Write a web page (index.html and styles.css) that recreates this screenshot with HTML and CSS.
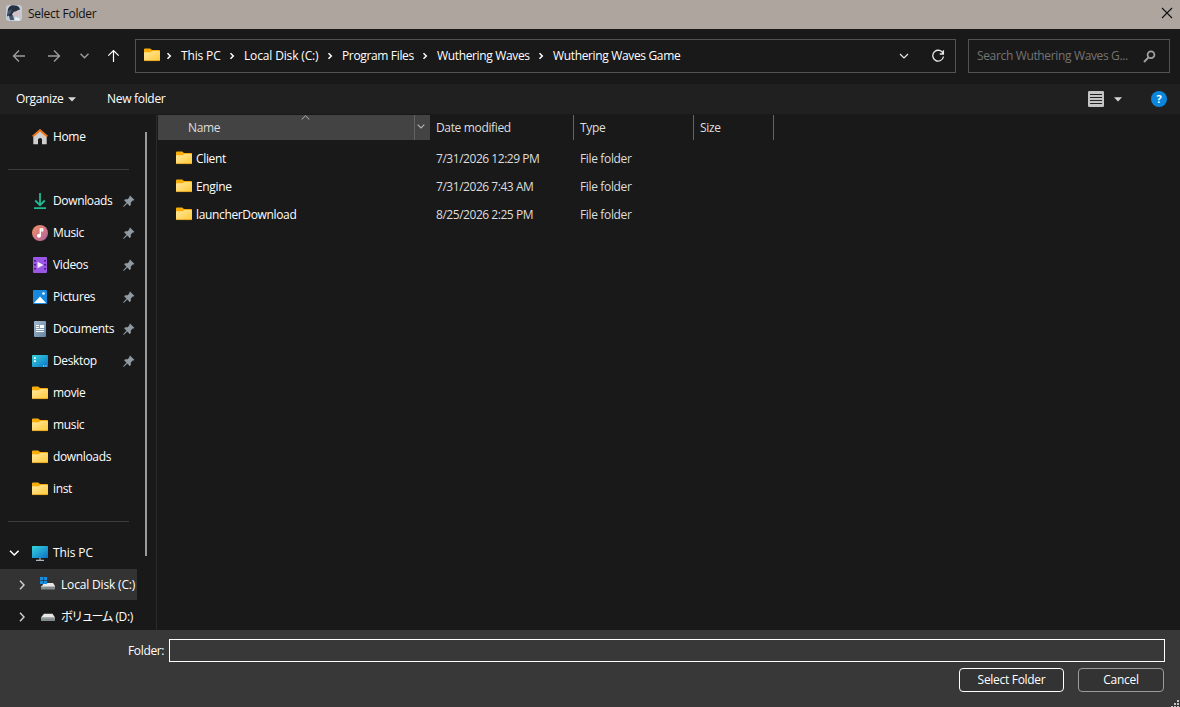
FILE: index.html
```html
<!DOCTYPE html>
<html lang="en">
<head>
    <meta charset="UTF-8">
    <meta name="viewport" content="width=device-width, initial-scale=1.0">
    <title>Select Folder</title>
    <link rel="stylesheet" href="styles.css">
</head>
<body>
    <!-- Shared icons -->
    <svg class="defs" width="0" height="0">
        <defs>
            <linearGradient id="gFolder" x1="0" y1="0" x2="1" y2="1">
                <stop offset="0" stop-color="#ffe8a0"/><stop offset="1" stop-color="#ffc937"/>
            </linearGradient>
            <linearGradient id="gScreen" x1="0" y1="0" x2="1" y2="1">
                <stop offset="0" stop-color="#35d6df"/><stop offset="1" stop-color="#0c6fc4"/>
            </linearGradient>
        </defs>
        <symbol id="folder" viewBox="0 0 16 16">
            <path d="M0 2.6Q0 1.5 1 1.5h5.2L8 3h7.2q.8 0 .8.8V8H0z" fill="#f8ad09"/>
            <path d="M0 6q0-.8.8-.8h6L8.300 4H15.200q.8 0 .8.800V13.300q0 .7-.8.7H.8Q0 14 0 13.300z" fill="url(#gFolder)"/>
            <path d="M.3 13.600h15.400" stroke="#dc9c1c" stroke-width=".8"/>
        </symbol>
        <symbol id="pin" viewBox="0 0 12 12">
            <path d="M7 .5 11.500 5l-1.200.6-.6-.1L7.800 7.600 7.900 9.900 6.700 10.900 4.300 8.500 1 11.700H.3V11L3.500 7.700 1.200 5.300 2.200 4.200 4.500 4.300 6.500 2.300 6.300 1.500z" fill="#8f9aa3"/>
        </symbol>
        <symbol id="right" viewBox="0 0 6 8">
            <path d="M1.500 1.200 4.300 4 1.500 6.800" fill="none" stroke="#fff" stroke-width="1.500"/>
        </symbol>
    </svg>

    <div class="dialog">
        <div class="titlebar">
            <svg class="app-icon" width="16" height="16" viewBox="0 0 16 16">
                <rect width="16" height="16" rx="3" fill="#c3ccd6"/>
                <path d="M2 4Q4-1 9 .5q4 0 5 4l-3 1-1 2-2-1-2 3 1 3-3 2-1-4-2 1z" fill="#28303f"/>
                <path d="M9 6.500q2-1 3 0l1 3-2 2-3-1z" fill="#d9bdc0"/>
                <path d="M2 6 6 4 5 8 2 10zM4 11l3-1 1 5H4z" fill="#46546c"/>
                <path d="M9 12l4 1 1 2.500H9z" fill="#eceff3"/>
            </svg>
            <span class="title">Select Folder</span>
            <svg class="close" width="12" height="12" viewBox="0 0 12 12"><path d="M1 1l10 10M11 1 1 11" stroke="#111" stroke-width="1.100"/></svg>
        </div>

        <div class="nav">
            <div class="nav-buttons">
                <svg width="14" height="14" viewBox="0 0 14 14"><path d="M13 7H1.500M7 1.500 1.500 7 7 12.500" fill="none" stroke="#9c9c9c" stroke-width="1.400"/></svg>
                <svg width="14" height="14" viewBox="0 0 14 14"><path d="M1 7h11.500M7 1.500 12.500 7 7 12.500" fill="none" stroke="#9c9c9c" stroke-width="1.400"/></svg>
                <svg class="recent" width="10" height="8" viewBox="0 0 10 8"><path d="M1.500 1.800 5.500 5.800 9.500 1.800" fill="none" stroke="#9c9c9c" stroke-width="1.400"/></svg>
                <svg width="14" height="14" viewBox="0 0 14 14"><path d="M7.500 13V1.500M2.300 6.700 7.500 1.500l5.200 5.200" fill="none" stroke="#fff" stroke-width="1.200"/></svg>
            </div>
            <div class="address">
                <svg class="folder" width="16" height="16"><use href="#folder"/></svg>
                <svg class="sep first" width="6" height="8"><use href="#right"/></svg>
                <span class="crumb c1">This PC</span>
                <svg class="sep" width="6" height="8"><use href="#right"/></svg>
                <span class="crumb c2">Local Disk (C:)</span>
                <svg class="sep" width="6" height="8"><use href="#right"/></svg>
                <span class="crumb c3">Program Files</span>
                <svg class="sep" width="6" height="8"><use href="#right"/></svg>
                <span class="crumb c4">Wuthering Waves</span>
                <svg class="sep" width="6" height="8"><use href="#right"/></svg>
                <span class="crumb c5">Wuthering Waves Game</span>
                <div class="address-actions">
                    <svg width="10" height="8" viewBox="0 0 10 8"><path d="M1 2 5 6 9 2" fill="none" stroke="#e8e8e8" stroke-width="1.200"/></svg>
                    <svg width="14" height="14" viewBox="0 0 14 14"><path d="M12.300 5A5.400 5.400 0 1 0 12.500 7.500M12.400 1.200V5H8.700" fill="none" stroke="#e8e8e8" stroke-width="1.300"/></svg>
                </div>
            </div>
            <div class="search">
                <span>Search Wuthering Waves G...</span>
                <svg width="13" height="13" viewBox="0 0 13 13"><circle cx="8" cy="4.800" r="3.400" fill="none" stroke="#a0a0a0" stroke-width="1.800"/><path d="M5.400 7.500 1 12" stroke="#a0a0a0" stroke-width="1.900"/></svg>
            </div>
        </div>

        <div class="toolbar">
            <span class="organize">Organize</span>
            <svg width="8" height="5" viewBox="0 0 8 5"><path d="M0 .3h8L4 4.500z" fill="#d6d6d6"/></svg>
            <span class="new-folder">New folder</span>
            <svg class="view" width="16" height="16" viewBox="0 0 16 16"><rect width="16" height="16" rx="1.200" fill="#c4c4c4"/><path d="M2 3.500h12M2 6.500h12M2 9.500h12M2 12.500h12" stroke="#222"/></svg>
            <svg class="view-arrow" width="8" height="5" viewBox="0 0 8 5"><path d="M0 .3h8L4 4.500z" fill="#d6d6d6"/></svg>
            <span class="help">?</span>
        </div>

        <div class="main">
            <div class="sidebar">
                <div class="tree">
                    <div class="item">
                        <svg width="16" height="16" viewBox="0 0 16 16"><path d="M1.300 7 8 1.500 14.700 7v8.200H10V10.500Q10 9 8.200 9T6 10.500v4.700H1.300z" fill="#cfcfcf"/><path d="M.7 7.600 8 1.200l7.300 6.400" fill="none" stroke="#e8761d" stroke-width="2"/></svg>
                        <span>Home</span>
                    </div>
                    <div class="line"></div>
                    <div class="item">
                        <svg width="16" height="16" viewBox="0 0 16 16"><path d="M8 0v12M3.200 7.500 8 12.200l4.800-4.700M2 15.200h12" fill="none" stroke="#21b893" stroke-width="1.800"/></svg>
                        <span>Downloads</span><svg class="pin" width="12" height="12"><use href="#pin"/></svg>
                    </div>
                    <div class="item">
                        <svg width="16" height="16" viewBox="0 0 16 16"><defs><linearGradient id="gMusic" x1="0" y1="0" x2="1" y2="1"><stop offset="0" stop-color="#f6925f"/><stop offset="1" stop-color="#ae5fa6"/></linearGradient></defs><circle cx="8" cy="8" r="8" fill="url(#gMusic)"/><circle cx="7" cy="10.700" r="2" fill="#fff"/><path d="M8.300 11V4h2.400v1.800H8.300" fill="none" stroke="#fff" stroke-width="1.300"/></svg>
                        <span>Music</span><svg class="pin" width="12" height="12"><use href="#pin"/></svg>
                    </div>
                    <div class="item">
                        <svg width="16" height="16" viewBox="0 0 16 16"><rect x="1" width="14" height="16" rx="1" fill="#9a57e6"/><path d="M2 3h2v1.500H2zM2 7h2v1.500H2zM2 11h2v1.500H2zM12 3h2v1.500h-2zM12 7h2v1.500h-2zM12 11h2v1.500h-2z" fill="#4b1e8c"/><path d="M5.500 4.700 11.500 8l-6 3.300z" fill="#f3eef9"/></svg>
                        <span>Videos</span><svg class="pin" width="12" height="12"><use href="#pin"/></svg>
                    </div>
                    <div class="item">
                        <svg width="16" height="16" viewBox="0 0 16 16"><rect x="1" y="1" width="14" height="14" rx="1" fill="#1689dc"/><path d="M2 14 8 7.500 14 14z" fill="#fff"/><circle cx="11.500" cy="4.500" r="1.300" fill="#fff"/></svg>
                        <span>Pictures</span><svg class="pin" width="12" height="12"><use href="#pin"/></svg>
                    </div>
                    <div class="item">
                        <svg width="16" height="16" viewBox="0 0 16 16"><defs><linearGradient id="gDoc" x1="0" y1="0" x2="1" y2="1"><stop offset="0" stop-color="#a5b9cc"/><stop offset="1" stop-color="#6484a3"/></linearGradient></defs><rect x="2" width="12" height="16" rx="1" fill="url(#gDoc)"/><path d="M4 4.500h3M4 6.500h3M4 8.500h8M4 10.500h8" stroke="#fff"/><path d="M8 4h4v3H8z" fill="#fff"/></svg>
                        <span>Documents</span><svg class="pin" width="12" height="12"><use href="#pin"/></svg>
                    </div>
                    <div class="item">
                        <svg width="16" height="16" viewBox="0 0 16 16"><rect y="2" width="16" height="12" rx=".8" fill="url(#gScreen)"/><path d="M2 4.200h1.800V6H2zM2 7.200h1.800V9H2z" fill="#fff"/><path d="M11 13h1.300M13.400 13h1.300" stroke="#c9e6ff"/></svg>
                        <span>Desktop</span><svg class="pin" width="12" height="12"><use href="#pin"/></svg>
                    </div>
                    <div class="item"><svg width="16" height="16"><use href="#folder"/></svg><span>movie</span></div>
                    <div class="item"><svg width="16" height="16"><use href="#folder"/></svg><span>music</span></div>
                    <div class="item"><svg width="16" height="16"><use href="#folder"/></svg><span>downloads</span></div>
                    <div class="item"><svg width="16" height="16"><use href="#folder"/></svg><span>inst</span></div>
                    <div class="line"></div>
                    <div class="item pc">
                        <svg class="expand" width="10" height="8" viewBox="0 0 10 8"><path d="M1 1.800 5.300 6 9.600 1.800" fill="none" stroke="#fff" stroke-width="1.500"/></svg>
                        <svg width="16" height="16" viewBox="0 0 16 16"><rect y="1" width="16" height="12" rx=".6" fill="url(#gScreen)"/><path d="M8 13v2M4 15.400h8" stroke="#aeb6bd" stroke-width="1.200"/></svg>
                        <span>This PC</span>
                    </div>
                    <div class="item drive selected">
                        <svg class="expand" width="6" height="10" viewBox="0 0 6 10"><path d="M1 .8 5 5 1 9.200" fill="none" stroke="#d0d0d0" stroke-width="1.500"/></svg>
                        <svg width="16" height="16" viewBox="0 0 16 16"><path d="M4 6h9l2 3H2z" fill="#e8e8e8"/><path d="M1 9h14v3.500H1z" fill="#85898b"/><path d="M1 9.500h14" stroke="#bbb"/><path d="M3.200 10.500h1.500" stroke="#35e04e"/><path d="M0 0h3.200v3.200H0zM3.900 0h3.200v3.200H3.900zM0 3.900h3.200v3.200H0zM3.900 3.900h3.200v3.200H3.900z" fill="#168de0"/></svg>
                        <span class="disk">Local Disk (C:)</span>
                    </div>
                    <div class="item drive">
                        <svg class="expand" width="6" height="10" viewBox="0 0 6 10"><path d="M1 .8 5 5 1 9.200" fill="none" stroke="#d0d0d0" stroke-width="1.500"/></svg>
                        <svg width="16" height="16" viewBox="0 0 16 16"><path d="M4 4.800h8.500L15 8.500H1z" fill="#e8e8e8"/><path d="M1 8.500h14V12H1z" fill="#85898b"/><path d="M1 8.800h14" stroke="#bbb"/><path d="M3.200 10h1.500" stroke="#35e04e"/></svg>
                        <span><span class="jp">ボリューム</span> (D:)</span>
                    </div>
                </div>
                <div class="scrollbar"></div>
            </div>

            <div class="files">
                <div class="row head">
                    <div class="name">
                        <span>Name</span>
                        <svg class="sort" width="9" height="5" viewBox="0 0 9 5"><path d="M.7 4.500 4.500.8l3.800 3.700" fill="none" stroke="#b5b5b5"/></svg>
                        <div class="drop"><svg width="8" height="5" viewBox="0 0 8 5"><path d="M.7.700 4 4 7.300.7" fill="none" stroke="#b5b5b5" stroke-width="1.100"/></svg></div>
                    </div>
                    <div class="date">Date modified</div>
                    <div class="type">Type</div>
                    <div class="size">Size</div>
                </div>
                <div class="rows">
                    <div class="row">
                        <div class="name"><svg width="16" height="16"><use href="#folder"/></svg><span>Client</span></div>
                        <div class="date">7/31/2026 12:29 PM</div>
                        <div class="type">File folder</div>
                    </div>
                    <div class="row">
                        <div class="name"><svg width="16" height="16"><use href="#folder"/></svg><span>Engine</span></div>
                        <div class="date">7/31/2026 7:43 AM</div>
                        <div class="type">File folder</div>
                    </div>
                    <div class="row">
                        <div class="name"><svg width="16" height="16"><use href="#folder"/></svg><span>launcherDownload</span></div>
                        <div class="date">8/25/2026 2:25 PM</div>
                        <div class="type">File folder</div>
                    </div>
                </div>
            </div>
        </div>

        <div class="footer">
            <div class="field">
                <label for="folder-name">Folder:</label>
                <input type="text" id="folder-name">
            </div>
            <div class="buttons">
                <button type="button" class="primary">Select Folder</button>
                <button type="button">Cancel</button>
            </div>
            <svg class="grip" width="9" height="9" viewBox="0 0 9 9"><path d="M6 2h2v2H6zM6 5h2v2H6zM6 8h2v1H6zM3 5h2v2H3zM3 8h2v1H3zM0 8h2v1H0z" fill="#c4c4c4"/></svg>
        </div>
    </div>
</body>
</html>
```

FILE: styles.css
```css
* {
    box-sizing: border-box;
}
body {
    margin: 0;
    background-color: #191919;
    color: #fff;
    font-family: "Open Sans", "Noto Sans CJK JP", sans-serif;
    font-size: 12px;
    line-height: 16px;
    letter-spacing: -0.35px;
    white-space: nowrap;
    overflow: hidden;
}
svg {
    display: block;
    flex: none;
}
.defs {
    position: absolute;
}
.dialog {
    width: 1180px;
    height: 707px;
    display: flex;
    flex-direction: column;
}

/* Title bar */
.titlebar {
    height: 29px;
    padding: 0 7px 3px 6px;
    display: flex;
    align-items: center;
    background-color: #aea59e;
    color: #111;
}
.title {
    margin-left: 6px;
    padding-top: 2px;
    letter-spacing: -0.25px;
}
.close {
    margin-left: auto;
}

/* Navigation */
.nav {
    height: 55px;
    padding: 10px 10px 0 12px;
    display: flex;
}
.nav-buttons {
    width: 123px;
    height: 34px;
    display: flex;
    align-items: center;
    gap: 21px;
}
.nav-buttons .recent {
    margin-left: -3px;
    margin-right: -4px;
}
.address {
    width: 821px;
    height: 34px;
    padding: 0 10px 0 8px;
    border: 1px solid #535353;
    display: flex;
    align-items: center;
}
.folder {
    margin-top: -2px;
}
.sep {
    margin: 0 9px 0 8px;
}
.sep.first {
    margin: 0 9px 0 6px;
}
.c1 { width: 40px; letter-spacing: -0.15px; }
.c2 { width: 75px; letter-spacing: -0.15px; }
.c3 { width: 72px; }
.c4 { width: 93px; }
.address-actions {
    margin-left: auto;
    display: flex;
    align-items: center;
    gap: 22px;
}
.search {
    width: 202px;
    height: 34px;
    margin-left: 12px;
    padding: 0 13px 0 8px;
    border: 1px solid #535353;
    display: flex;
    align-items: center;
    justify-content: space-between;
    color: #747474;
}

/* Toolbar */
.toolbar {
    height: 30px;
    padding: 0 13px 0 16px;
    display: flex;
    align-items: center;
    background-color: #202020;
}
.organize {
    width: 52px;
}
.new-folder {
    margin-left: 31px;
    letter-spacing: -0.3px;
}
.view {
    margin-left: auto;
}
.view-arrow {
    margin: 0 29px 0 10px;
}
.help {
    width: 16px;
    height: 16px;
    border-radius: 50%;
    background-color: #0c86db;
    font-size: 11px;
    font-weight: 700;
    text-align: center;
}

/* Tree */
.main {
    height: 516px;
    padding-top: 1px;
    display: flex;
}
.sidebar {
    width: 158px;
    display: flex;
    border-right: 1px solid #191919;
    box-shadow: inset -1px 0 #2b2b2b;
    overflow: hidden;
}
.tree {
    width: 137px;
    padding-top: 6px;
}
.item {
    height: 32px;
    padding-left: 32px;
    display: flex;
    align-items: center;
}
.item > span {
    margin-left: 5px;
}
.item .pin {
    margin-left: auto;
    margin-right: 2px;
}
.line {
    height: 32px;
    margin: 0 8px;
    padding-top: 16px;
}
.line::before {
    content: "";
    display: block;
    border-top: 1px solid #3d3d3d;
}
.pc {
    padding-left: 9px;
    letter-spacing: -0.1px;
}
.pc .expand {
    margin-right: 13px;
}
.drive {
    padding-left: 19px;
}
.drive .expand {
    margin-right: 15px;
}
.disk {
    letter-spacing: -0.17px;
}
.jp {
    letter-spacing: -1.8px;
    margin-right: 1px;
}
.selected {
    background-color: #333;
    border-bottom: 1px solid #191919;
}
.scrollbar {
    width: 2px;
    height: 424px;
    margin: 17px 0 0 8px;
    background-color: #9a9a9a;
}

/* File list */
.files {
    flex: 1;
}
.row {
    height: 28px;
    display: flex;
    align-items: center;
}
.rows {
    padding-top: 5px;
    color: #dedede;
}
.name {
    width: 272px;
    padding-left: 18px;
    display: flex;
    align-items: center;
    color: #fff;
}
.name svg {
    margin-top: -2px;
}
.name span {
    margin-left: 4px;
}
.date {
    width: 144px;
    padding-left: 6px;
}
.rows .date {
    letter-spacing: -0.46px;
}
.type {
    width: 120px;
    padding-left: 6px;
}
.size {
    width: 80px;
    padding-left: 6px;
}
.head {
    height: 25px;
    color: #dedede;
}
.head > div {
    height: 25px;
    line-height: 26px;
}
.head .name {
    padding-left: 26px;
    background-color: #434343;
    color: #dedede;
    position: relative;
}
.head .date, .head .type, .head .size {
    border-right: 1px solid #636363;
}
.sort {
    position: absolute;
    left: 143px;
    top: 2px;
}
.drop {
    width: 16px;
    height: 25px;
    margin-left: auto;
    padding-left: 2px;
    border-left: 1px solid #636363;
    display: flex;
    align-items: center;
}

/* Footer */
.footer {
    height: 77px;
    padding: 9px 15px 0 128px;
    background-color: #383838;
    position: relative;
}
.field {
    display: flex;
    align-items: center;
}
.field label {
    width: 41px;
}
.field input {
    flex: 1;
    height: 23px;
    border: 1px solid #fff;
    background-color: #383838;
    color: #fff;
}
.buttons {
    margin: 6px 1px 0 0;
    display: flex;
    justify-content: flex-end;
    gap: 14px;
}
button {
    width: 86px;
    height: 24px;
    padding: 0;
    border: 1px solid #9b9b9b;
    border-radius: 4px;
    background-color: #333;
    color: #fff;
    font: inherit;
    letter-spacing: -0.3px;
}
.primary {
    width: 105px;
    border-color: #fff;
}
.grip {
    position: absolute;
    right: 0;
    bottom: 0;
}
```
